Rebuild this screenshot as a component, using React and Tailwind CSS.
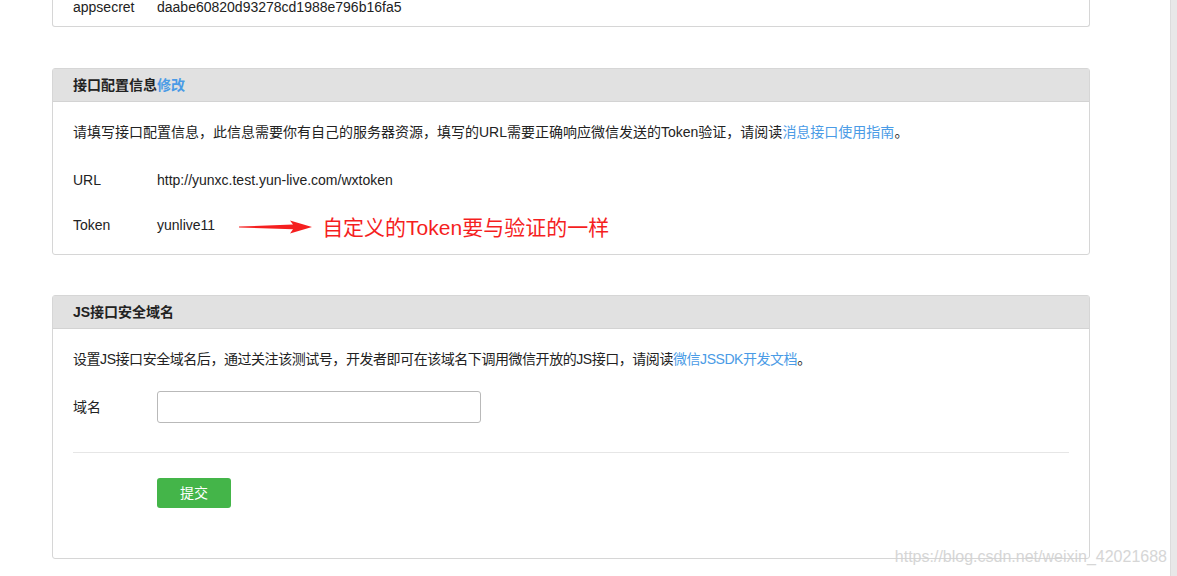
import React from 'react';

const font = "font-['Liberation_Sans','Noto_Sans_CJK_SC',sans-serif]";

function Panel({ title, children, className = '' }) {
  return (
    <div className={`w-[1038px] border border-[#d6d6d6] rounded-[3px] bg-white ${className}`}>
      <div className="h-[33px] bg-[#e1e1e1] border-b border-[#d3d3d3] px-5 flex items-center text-[14px] font-bold text-[#222]">
        {title}
      </div>
      {children}
    </div>
  );
}

function Row({ label, children, className = 'min-h-[20px]' }) {
  return (
    <div className={`flex items-center text-[14px] leading-[20px] text-[#222] ${className}`}>
      <span className="w-[84px] shrink-0">{label}</span>
      {children}
    </div>
  );
}

function Arrow() {
  return (
    <svg width="74" height="14" viewBox="0 0 74 14" className="ml-[24px] mt-[3px]">
      <path d="M0 6.6 L54 4.6 L51 0.5 L73 7 L51 13.5 L54 9.2 L0 7.4 Z" fill="#f51f1f" />
    </svg>
  );
}

export default function App() {
  const link = 'text-[#4a9be6]';
  return (
    <div className={`relative flex w-full h-[576px] overflow-hidden bg-white ${font}`}>
      <div className="flex-1 pl-[52px]">
        {/* 上一块（被截断） */}
        <div className="w-[1038px] -mt-[20px] border-x border-b border-[#d6d6d6] rounded-b-[3px] px-5 pt-[17px] pb-[9px]">
          <Row label="appsecret">daabe60820d93278cd1988e796b16fa5</Row>
        </div>

        {/* 接口配置信息 */}
        <Panel
          className="mt-[41px]"
          title={
            <span>
              接口配置信息<span className={link}>修改</span>
            </span>
          }
        >
          <div className="px-5 pt-[20px] pb-[19px]">
            <p className="text-[14px] leading-[20px] text-[#222]">
              请填写接口配置信息，此信息需要你有自己的服务器资源，填写的URL需要正确响应微信发送的Token验证，请阅读
              <span className={link}>消息接口使用指南</span>。
            </p>
            <div className="mt-[28px] flex flex-col gap-[25px]">
              <Row label="URL">http://yunxc.test.yun-live.com/wxtoken</Row>
              <Row label="Token" className="h-[20px]">
                <span>yunlive11</span>
                <Arrow />
                <span className="ml-[9px] mt-[5px] text-[21px] leading-[20px] text-[#f51f1f] whitespace-nowrap">
                  自定义的Token要与验证的一样
                </span>
              </Row>
            </div>
          </div>
        </Panel>

        {/* JS接口安全域名 */}
        <Panel className="mt-[40px]" title="JS接口安全域名">
          <div className="px-5 pt-[20px] pb-[50px]">
            <p className="text-[14px] leading-[20px] text-[#222] tracking-[-0.45px]">
              设置JS接口安全域名后，通过关注该测试号，开发者即可在该域名下调用微信开放的JS接口，请阅读
              <span className={link}>微信JSSDK开发文档</span>。
            </p>
            <div className="mt-[22px]">
              <Row label="域名">
                <input
                  type="text"
                  className="w-[324px] h-[32px] border border-[#b9b9b9] rounded-[3px] px-2 outline-none"
                />
              </Row>
            </div>
            <div className="mt-[29px] border-t border-[#e6e6e6]" />
            <div className="mt-[25px] pl-[84px]">
              <button className="w-[74px] h-[30px] rounded-[3px] bg-[#44b549] text-white text-[14px]">
                提交
              </button>
            </div>
          </div>
        </Panel>
      </div>

      {/* 滚动条 */}
      <div className="w-[7px] h-full bg-[#e8e8e8] border-l border-[#dcdcdc]" />

      {/* 水印 */}
      <div className="absolute right-[10px] top-[546px] text-[16px] leading-[22px] text-[#d2d2d2] font-['Liberation_Sans',sans-serif] opacity-90">
        https://blog.csdn.net/weixin_42021688
      </div>
    </div>
  );
}
